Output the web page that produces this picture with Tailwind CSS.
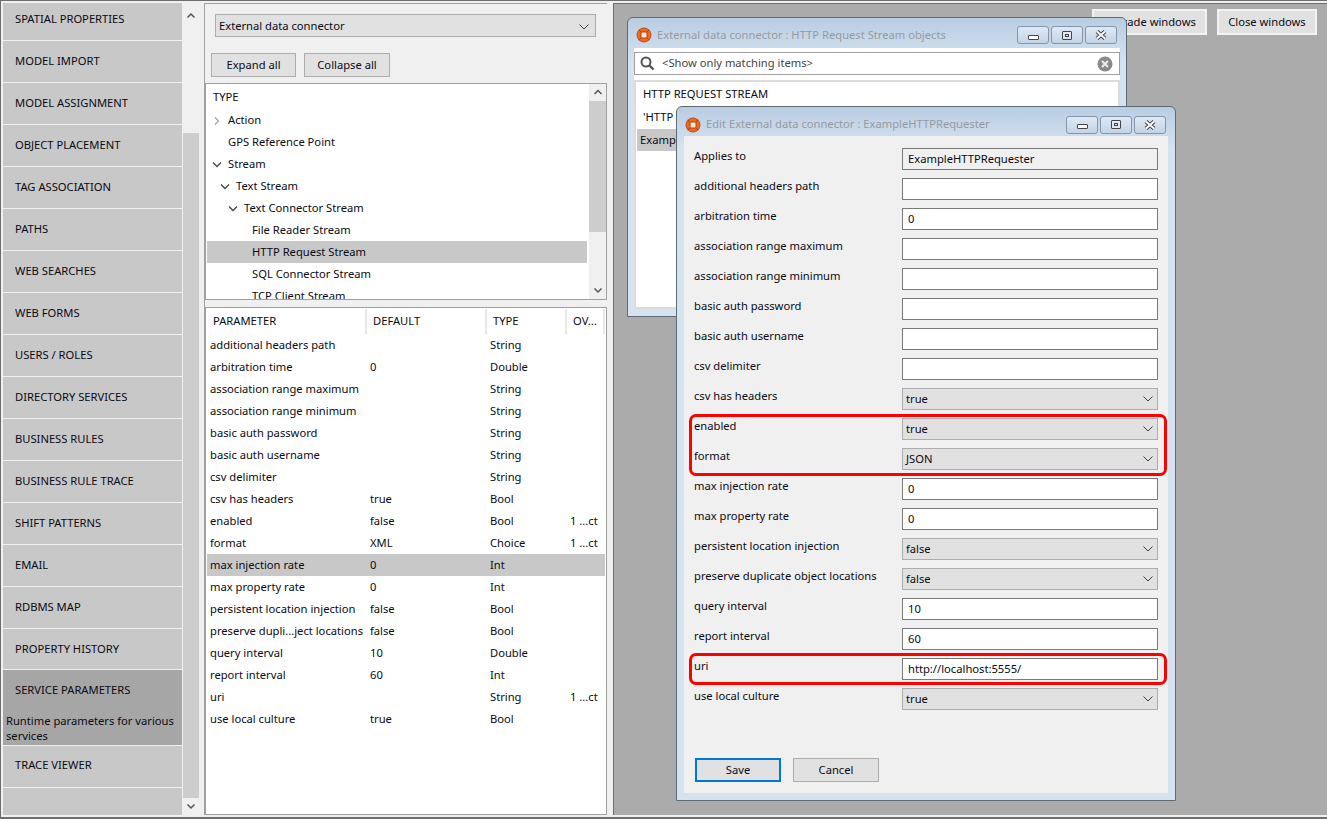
<!DOCTYPE html>
<html lang="en">
<head>
  <meta charset="UTF-8">
  <title>Service Parameters</title>
  <script src="https://cdn.jsdelivr.net/npm/@tailwindcss/browser@4"></script>
</head>
<body class="w-[1327px] h-[819px] overflow-hidden bg-[#f0f0f0] text-[11.2px] text-[#0a0a14] font-['Noto_Sans',sans-serif] whitespace-nowrap">
<div class="flex h-[819px] border-t border-b-2 border-l border-[#6e6e6e] pt-[2px] pb-[2px] pl-[2px]">

  <!-- left nav -->
  <div class="flex w-[197px] shrink-0 h-[812px]">
    <div id="nav" class="w-[179px] flex flex-col overflow-hidden"></div>
    <div class="w-[16px] ml-[1px] flex flex-col items-center">
      <svg class="h-[16px] mt-[5px] mb-[109px]" width="10" height="16" viewBox="0 0 10 16"><path d="M1.500 9.500 5 6l3.500 3.500" fill="none" stroke="#555" stroke-width="1.500"/></svg>
      <div class="w-full flex-1 bg-[#cdcdcd]"></div>
      <svg class="h-[17px]" width="10" height="17" viewBox="0 0 10 17"><path d="M1.500 6.500 5 10l3.500-3.500" fill="none" stroke="#555" stroke-width="1.500"/></svg>
    </div>
  </div>

  <!-- middle column -->
  <div class="w-[403px] ml-[4px] shrink-0 flex flex-col h-[812px] border-l border-t border-[#a0a0a0]">
    <div class="h-[79px] px-[10px] shrink-0">
      <div class="mt-[10px] h-[23px] pt-[2px] w-[381px] flex items-center justify-between bg-[#e1e1e1] border border-[#adadad] pl-[3px] pr-[5px]">
        <span>External data connector</span>
        <svg width="12" height="8" viewBox="0 0 12 8"><path d="M1.500 1.500 6 6l4.500-4.500" fill="none" stroke="#444" stroke-width="1"/></svg>
      </div>
      <div class="flex gap-[8px] mt-[16px] -ml-[4px]">
        <div class="w-[85px] h-[24px] flex items-center justify-center bg-[#e1e1e1] border border-[#adadad]">Expand all</div>
        <div class="w-[86px] h-[24px] flex items-center justify-center bg-[#e1e1e1] border border-[#adadad]">Collapse all</div>
      </div>
    </div>

    <div class="h-[217px] shrink-0 bg-white border border-[#a0a0a0] flex overflow-hidden relative">
      <div id="tree" class="flex-1 pt-[2px] pl-[1px] pr-[2px] overflow-hidden"></div>
      <div class="w-[17px] shrink-0 bg-[#f0f0f0] flex flex-col items-center">
        <svg class="h-[17px]" width="10" height="17" viewBox="0 0 10 17"><path d="M1.500 10 5 6.500 8.500 10" fill="none" stroke="#555" stroke-width="1.500"/></svg>
        <div class="w-full h-[131px] bg-[#cdcdcd]"></div>
        <div class="flex-1"></div>
        <svg class="h-[17px]" width="10" height="17" viewBox="0 0 10 17"><path d="M1.500 6.500 5 10l3.500-3.500" fill="none" stroke="#555" stroke-width="1.500"/></svg>
      </div>
    </div>

    <div class="h-[508px] mt-[7px] shrink-0 bg-white border border-[#a0a0a0] pl-[1px] pr-[1px] pt-[1px]">
      <div class="flex h-[25px] items-center">
        <div class="w-[160px] h-full flex items-center pl-[6px] border-r-2 border-[#e9e9e9]">PARAMETER</div>
        <div class="w-[120px] h-full flex items-center pl-[6px] border-r-2 border-[#e9e9e9]">DEFAULT</div>
        <div class="w-[80px] h-full flex items-center pl-[6px] border-r-2 border-[#e9e9e9]">TYPE</div>
        <div class="w-[38px] h-full flex items-center pl-[6px] border-r-2 border-[#e9e9e9]">OV...</div>
      </div>
      <div id="params"></div>
    </div>
  </div>

  <!-- desktop area -->
  <div class="relative ml-[6px] flex-1 h-[812px] bg-[#ababab] border-l border-t border-[#6e6e6e]">
    <div class="absolute left-[478px] top-[5px] flex gap-[10px]">
      <div class="w-[115px] h-[26px] flex items-center justify-center bg-[#e1e1e1] border-2 border-[#f3f3f3]">Cascade windows</div>
      <div class="w-[100px] h-[26px] flex items-center justify-center bg-[#e1e1e1] border-2 border-[#f3f3f3]">Close windows</div>
    </div>

    <!-- objects window -->
    <div class="absolute left-[13px] top-[13px] w-[500px] h-[300px] rounded-t-[6px] border border-[#5f6a75] bg-linear-to-b from-[#b9cde2] to-[#d5e3f1] to-[15%] px-[6px] pb-[7px] flex flex-col">
      <div class="h-[30px] shrink-0 pt-[4px] flex items-center pl-[2px] pr-[3px]">
        <svg width="16" height="16" viewBox="0 0 16 16"><circle cx="8" cy="8" r="7" fill="#ea6a22" stroke="#c9490f"/><rect x="5" y="5" width="6" height="6" rx="1" fill="#f8e6d6" stroke="#b93c0a"/><path d="M2.800 2.800 5 5M13.200 2.800 11 5M2.800 13.200 5 11M13.200 13.200 11 11" stroke="#b93c0a"/></svg>
        <span class="ml-[5px] text-[#969a9f]">External data connector : HTTP Request Stream objects</span>
        <div class="ml-auto flex gap-[2px]">
          <div class="w-[32px] h-[18px] rounded-[3px] border border-[#8296ad] bg-linear-to-b from-[#dfe9f4] to-[#c3d4e7] flex items-center justify-center"><span class="block w-[11px] h-[5px] mt-[4px] rounded-[1px] border border-[#444] bg-white"></span></div>
          <div class="w-[32px] h-[18px] rounded-[3px] border border-[#8296ad] bg-linear-to-b from-[#dfe9f4] to-[#c3d4e7] flex items-center justify-center"><span class="flex items-center justify-center w-[10px] h-[9px] rounded-[1px] border border-[#444] bg-white/30"><span class="w-[4px] h-[3px] border border-[#444]"></span></span></div>
          <div class="w-[32px] h-[18px] rounded-[3px] border border-[#8296ad] bg-linear-to-b from-[#dfe9f4] to-[#c3d4e7] flex items-center justify-center"><svg width="12" height="10" viewBox="0 0 12 10"><path d="M2 1.500 10 8.500M10 1.500 2 8.500" stroke="#444" stroke-width="4"/><path d="M2 1.500 10 8.500M10 1.500 2 8.500" stroke="#fff" stroke-width="2"/></svg></div>
        </div>
      </div>
      <div class="flex-1 bg-white pt-[4px] flex flex-col min-h-0">
        <div class="h-[23px] shrink-0 bg-white border border-[#a0a0a0] flex items-center pl-[5px] pr-[6px]">
          <svg width="15" height="15" viewBox="0 0 15 15"><circle cx="6" cy="6" r="4.500" fill="none" stroke="#555" stroke-width="2"/><path d="M9.500 9.500 13.500 13.500" stroke="#555" stroke-width="2.400"/></svg>
          <span class="ml-[7px] text-[#444]">&lt;Show only matching items&gt;</span>
          <svg class="ml-auto" width="16" height="16" viewBox="0 0 16 16"><circle cx="8" cy="8" r="7.500" fill="#8a8a8a"/><path d="M5 5l6 6M11 5l-6 6" stroke="#eee" stroke-width="2"/></svg>
        </div>
        <div class="flex-1 mt-[5px] bg-white border-2 border-[#dcdcdc] pt-[1px] pl-[1px]">
          <div class="h-[22px] flex items-center pl-[6px]">HTTP REQUEST STREAM</div>
          <div class="h-[24px] flex items-center pl-[6px]">'HTTP Request Stream</div>
          <div class="h-[22px] flex items-center pl-[3px] bg-[#c8c8c8]">ExampleHTTPRequester</div>
        </div>
      </div>
    </div>

    <!-- edit window -->
    <div class="absolute left-[62px] top-[102px] w-[500px] h-[695px] rounded-t-[6px] border border-[#5f6a75] bg-linear-to-b from-[#b9cde2] to-[#d5e3f1] to-[6%] px-[7px] pb-[7px] flex flex-col">
      <div class="h-[29px] shrink-0 pt-[6px] flex items-center pl-[1px] pr-[2px]">
        <svg width="16" height="16" viewBox="0 0 16 16"><circle cx="8" cy="8" r="7" fill="#ea6a22" stroke="#c9490f"/><rect x="5" y="5" width="6" height="6" rx="1" fill="#f8e6d6" stroke="#b93c0a"/><path d="M2.800 2.800 5 5M13.200 2.800 11 5M2.800 13.200 5 11M13.200 13.200 11 11" stroke="#b93c0a"/></svg>
        <span class="ml-[5px] text-[#969a9f]">Edit External data connector : ExampleHTTPRequester</span>
        <div class="ml-auto flex gap-[2px]">
          <div class="w-[32px] h-[18px] rounded-[3px] border border-[#8296ad] bg-linear-to-b from-[#dfe9f4] to-[#c3d4e7] flex items-center justify-center"><span class="block w-[11px] h-[5px] mt-[4px] rounded-[1px] border border-[#444] bg-white"></span></div>
          <div class="w-[32px] h-[18px] rounded-[3px] border border-[#8296ad] bg-linear-to-b from-[#dfe9f4] to-[#c3d4e7] flex items-center justify-center"><span class="flex items-center justify-center w-[10px] h-[9px] rounded-[1px] border border-[#444] bg-white/30"><span class="w-[4px] h-[3px] border border-[#444]"></span></span></div>
          <div class="w-[32px] h-[18px] rounded-[3px] border border-[#8296ad] bg-linear-to-b from-[#dfe9f4] to-[#c3d4e7] flex items-center justify-center"><svg width="12" height="10" viewBox="0 0 12 10"><path d="M2 1.500 10 8.500M10 1.500 2 8.500" stroke="#444" stroke-width="4"/><path d="M2 1.500 10 8.500M10 1.500 2 8.500" stroke="#fff" stroke-width="2"/></svg></div>
        </div>
      </div>
      <div class="flex-1 bg-[#f0f0f0] pl-[10px] pr-[10px] pt-[12px] flex flex-col">
        <div id="form" class="flex flex-col gap-[8px]"></div>
        <div class="flex gap-[12px] mt-auto mb-[11px] ml-[1px]">
          <div class="w-[86px] h-[24px] flex items-center justify-center bg-[#e1e1e1] border-2 border-[#0078d7]">Save</div>
          <div class="w-[86px] h-[24px] flex items-center justify-center bg-[#e1e1e1] border border-[#adadad]">Cancel</div>
        </div>
      </div>
      <!-- red callouts -->
      <div class="absolute left-[12px] top-[307px] w-[478px] h-[62px] rounded-[7px] border-[3px] border-[#f00]"></div>
      <div class="absolute left-[12px] top-[546px] w-[478px] h-[32px] rounded-[7px] border-[3px] border-[#f00]"></div>
    </div>
  </div>
</div>

<script>
  const navItems = ['SPATIAL PROPERTIES','MODEL IMPORT','MODEL ASSIGNMENT','OBJECT PLACEMENT','TAG ASSOCIATION','PATHS','WEB SEARCHES','WEB FORMS','USERS / ROLES','DIRECTORY SERVICES','BUSINESS RULES','BUSINESS RULE TRACE','SHIFT PATTERNS','EMAIL','RDBMS MAP','PROPERTY HISTORY'];
  let nav = navItems.map((t, i) => `<div class="${i === 0 ? 'h-[38px] pb-[5px]' : i === 15 ? 'h-[41px]' : 'h-[42px]'} shrink-0 flex items-center pl-[12px] bg-[#c8c8c8] border-b border-[#f0f0f0]">${t}</div>`).join('');
  nav += `<div class="h-[76px] shrink-0 bg-[#a6a6a6] border-b border-[#f0f0f0] pl-[3px]"><div class="pl-[9px] pt-[12px] h-[43px]">SERVICE PARAMETERS</div><div class="leading-[15px] whitespace-normal">Runtime parameters for various services</div></div>`;
  nav += `<div class="h-[42px] shrink-0 flex items-center pl-[12px] pb-[2px] bg-[#c8c8c8] border-b border-[#f0f0f0]">TRACE VIEWER</div><div class="h-[27px] shrink-0 bg-[#c8c8c8]"></div>`;
  document.getElementById('nav').innerHTML = nav;

  // pad, caret (none, right, down), label
  const tree = [
    [6, '', 'TYPE'], [21, 'r', 'Action'], [21, '', 'GPS Reference Point'], [21, 'd', 'Stream'], [29, 'd', 'Text Stream'],
    [37, 'd', 'Text Connector Stream'], [45, '', 'File Reader Stream'], [45, '', 'HTTP Request Stream'], [45, '', 'SQL Connector Stream'], [45, '', 'TCP Client Stream']
  ];
  document.getElementById('tree').innerHTML = tree.map(([pad, caret, label], i) => {
    const sel = label === 'HTTP Request Stream';
    const icon = caret === 'r'
      ? `<svg class="absolute top-[7px]" style="left:${pad - 15}px" width="8" height="10" viewBox="0 0 8 10"><path d="M2 1.500 5.500 5 2 8.500" fill="none" stroke="#a6a6a6" stroke-width="1.300"/></svg>`
      : caret === 'd'
      ? `<svg class="absolute top-[8px]" style="left:${pad - 16}px" width="10" height="8" viewBox="0 0 10 8"><path d="M1 1.500 5 5.500l4-4" fill="none" stroke="#444" stroke-width="1.300"/></svg>`
      : '';
    return `<div class="relative ${i === 0 ? 'h-[23px]' : 'h-[22px]'} flex items-center ${sel ? 'bg-[#c8c8c8]' : ''}" style="padding-left:${pad}px">${icon}${label}</div>`;
  }).join('');

  const params = [
    ['additional headers path','','String',''],['arbitration time','0','Double',''],['association range maximum','','String',''],
    ['association range minimum','','String',''],['basic auth password','','String',''],['basic auth username','','String',''],
    ['csv delimiter','','String',''],['csv has headers','true','Bool',''],['enabled','false','Bool','1 ...ct'],['format','XML','Choice','1 ...ct'],
    ['max injection rate','0','Int',''],['max property rate','0','Int',''],['persistent location injection','false','Bool',''],
    ['preserve dupli...ject locations','false','Bool',''],['query interval','10','Double',''],['report interval','60','Int',''],
    ['uri','','String','1 ...ct'],['use local culture','true','Bool','']
  ];
  document.getElementById('params').innerHTML = params.map(r => `<div class="flex h-[22px] items-center pl-[3px] ${r[0] === 'max injection rate' ? 'bg-[#c8c8c8]' : ''}"><div class="w-[160px]">${r[0]}</div><div class="w-[120px]">${r[1]}</div><div class="w-[80px]">${r[2]}</div><div>${r[3]}</div></div>`).join('');

  // t: text input, r: readonly, s: select
  const fields = [
    ['Applies to','r','ExampleHTTPRequester'],['additional headers path','t',''],['arbitration time','t','0'],['association range maximum','t',''],
    ['association range minimum','t',''],['basic auth password','t',''],['basic auth username','t',''],['csv delimiter','t',''],['csv has headers','s','true'],
    ['enabled','s','true'],['format','s','JSON'],['max injection rate','t','0'],['max property rate','t','0'],['persistent location injection','s','false'],
    ['preserve duplicate object locations','s','false'],['query interval','t','10'],['report interval','t','60'],['uri','t','http://localhost:5555/'],['use local culture','s','true']
  ];
  const chevron = '<svg width="10" height="6" viewBox="0 0 10 6"><path d="M.5.500 5 5 9.500.500" fill="none" stroke="#444" stroke-width="1"/></svg>';
  document.getElementById('form').innerHTML = fields.map(([label, kind, value]) => {
    let box;
    if (kind === 's') box = `<div class="w-[256px] h-[22px] flex items-center justify-between pl-[3px] pr-[4px] bg-[#e1e1e1] border border-[#adadad]"><span>${value}</span>${chevron}</div>`;
    else if (kind === 'r') box = `<div class="w-[256px] h-[22px] flex items-center pl-[5px] bg-[#f0f0f0] border border-[#7a7a7a]">${value}</div>`;
    else box = `<div class="w-[256px] h-[22px] flex items-center pl-[5px] bg-white border border-[#7a7a7a]">${value}</div>`;
    return `<div class="flex justify-between h-[22px]"><div class="leading-[16px]">${label}</div>${box}</div>`;
  }).join('');
</script>
</body>
</html>
